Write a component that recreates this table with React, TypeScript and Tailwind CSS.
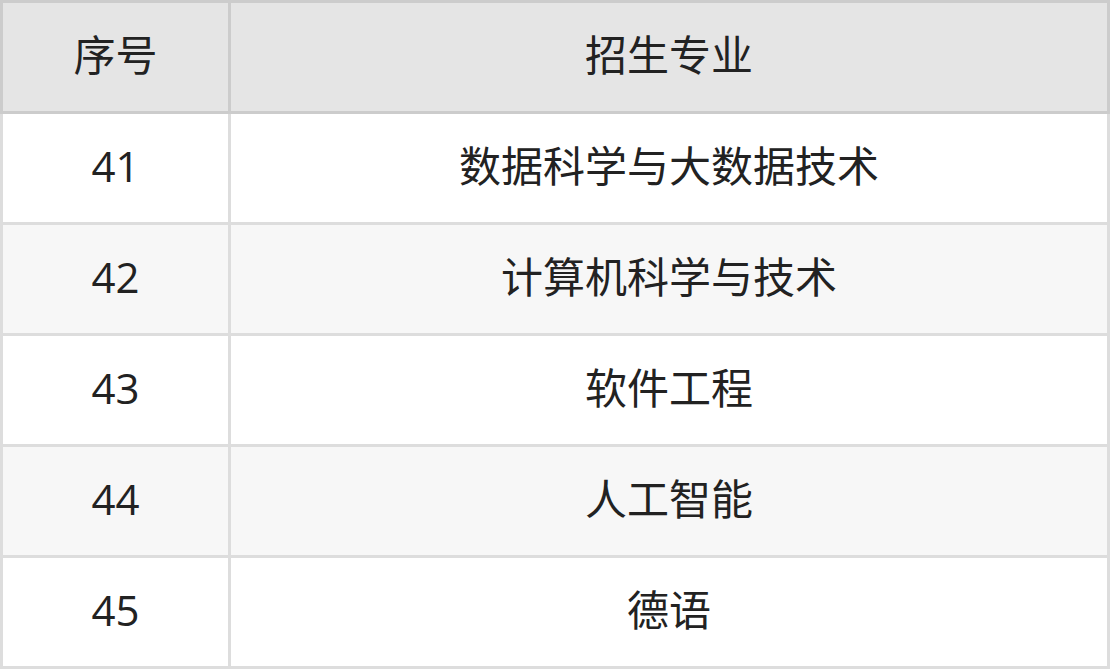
import React from 'react';

interface Major {
  id: number;
  name: string;
}

const majors: Major[] = [
  { id: 41, name: '数据科学与大数据技术' },
  { id: 42, name: '计算机科学与技术' },
  { id: 43, name: '软件工程' },
  { id: 44, name: '人工智能' },
  { id: 45, name: '德语' },
];

const App: React.FC = () => {
  return (
    <div
      className="w-[1110px] h-[669px] bg-white"
      style={{ fontFamily: '"Open Sans", "Noto Sans CJK SC", sans-serif' }}
    >
      <table className="w-full border-collapse text-center text-[42px] text-[#222] table-fixed">
        <thead>
          <tr>
            <th className="w-[228px] h-[111px] pb-[6px] font-normal bg-[#e5e5e5] border-[3px] border-[#ccc]">
              序号
            </th>
            <th className="h-[111px] pb-[6px] font-normal bg-[#e5e5e5] border-[3px] border-[#ccc]">
              招生专业
            </th>
          </tr>
        </thead>
        <tbody>
          {majors.map((major, i) => (
            <tr key={major.id} className={i % 2 === 1 ? 'bg-[#f7f7f7]' : 'bg-white'}>
              <td className="h-[111px] pb-[6px] border-[3px] border-[#ddd]">{major.id}</td>
              <td className="h-[111px] pb-[6px] border-[3px] border-[#ddd]">{major.name}</td>
            </tr>
          ))}
        </tbody>
      </table>
    </div>
  );
};

export default App;
